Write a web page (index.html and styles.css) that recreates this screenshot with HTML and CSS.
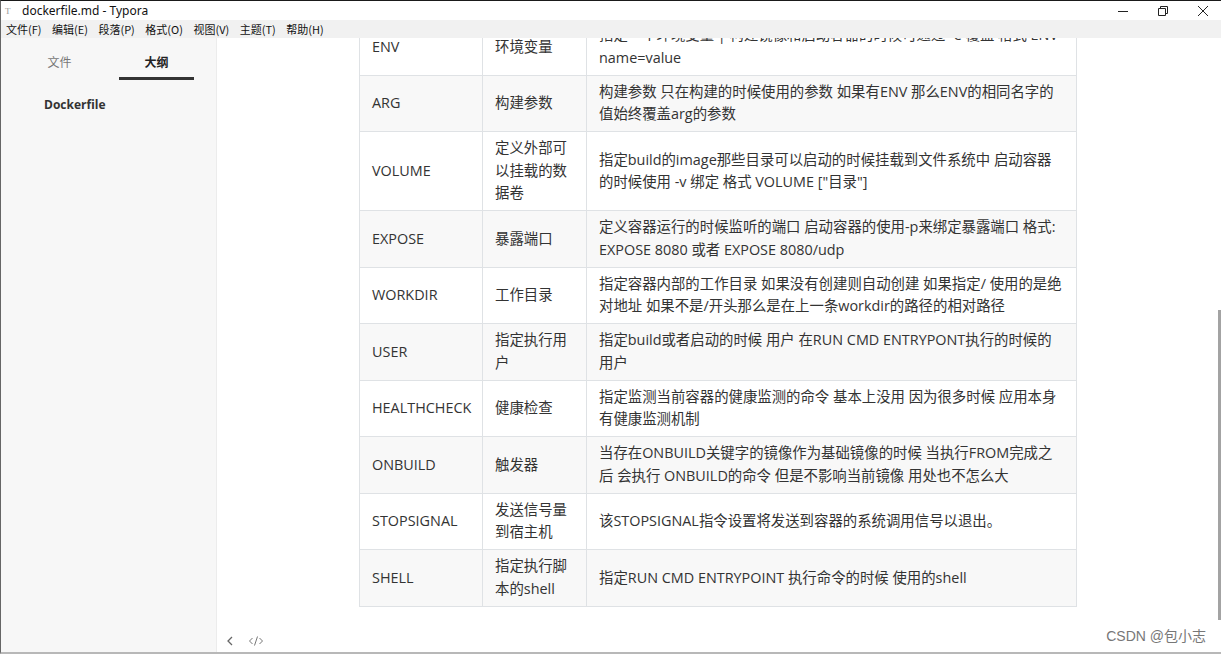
FILE: index.html
```html
<!DOCTYPE html>
<html lang="zh-CN">
<head>
<meta charset="utf-8">
<title>dockerfile.md - Typora</title>
<link rel="stylesheet" href="styles.css">
</head>
<body>
<div class="window">
  <header class="titlebar">
    <span class="app-icon">T</span>
    <span class="title">dockerfile.md - Typora</span>
    <div class="controls">
      <svg class="ctl" width="12" height="12" viewBox="0 0 12 12"><path d="M1 6.5h10" stroke="#222" stroke-width="1"/></svg>
      <svg class="ctl" width="12" height="12" viewBox="0 0 12 12"><path d="M1.5 3.5h7v7h-7z M3.5 3.5v-2h7v7h-2" fill="none" stroke="#222" stroke-width="1"/></svg>
      <svg class="ctl" width="12" height="12" viewBox="0 0 12 12"><path d="M1 1l10 10M11 1L1 11" stroke="#222" stroke-width="1"/></svg>
    </div>
  </header>
  <nav class="menubar">
    <span>文件(F)</span><span>编辑(E)</span><span>段落(P)</span><span>格式(O)</span><span>视图(V)</span><span>主题(T)</span><span>帮助(H)</span>
  </nav>
  <div class="main">
    <aside class="sidebar">
      <div class="tabs">
        <div class="tab">文件</div>
        <div class="tab active">大纲</div>
      </div>
      <div class="outline">Dockerfile</div>
    </aside>
    <section class="content">
      <div class="doc">
        <table class="md-table">
          <colgroup><col class="c1"><col class="c2"><col class="c3"></colgroup>
          <tbody>
            <tr><td>ENV</td><td>环境变量</td><td>指定一个环境变量 | 构建镜像和启动容器的时候可通过 -e 覆盖 格式 ENV name=value</td></tr>
            <tr><td>ARG</td><td>构建参数</td><td>构建参数 只在构建的时候使用的参数 如果有ENV 那么ENV的相同名字的值始终覆盖arg的参数</td></tr>
            <tr><td>VOLUME</td><td>定义外部可以挂载的数据卷</td><td>指定build的image那些目录可以启动的时候挂载到文件系统中 启动容器的时候使用 -v 绑定 格式 VOLUME ["目录"]</td></tr>
            <tr><td>EXPOSE</td><td>暴露端口</td><td>定义容器运行的时候监听的端口 启动容器的使用-p来绑定暴露端口 格式: EXPOSE 8080 或者 EXPOSE 8080/udp</td></tr>
            <tr><td>WORKDIR</td><td>工作目录</td><td>指定容器内部的工作目录 如果没有创建则自动创建 如果指定/ 使用的是绝对地址 如果不是/开头那么是在上一条workdir的路径的相对路径</td></tr>
            <tr><td>USER</td><td>指定执行用户</td><td>指定build或者启动的时候 用户 在RUN CMD ENTRYPONT执行的时候的用户</td></tr>
            <tr><td>HEALTHCHECK</td><td>健康检查</td><td>指定监测当前容器的健康监测的命令 基本上没用 因为很多时候 应用本身有健康监测机制</td></tr>
            <tr><td>ONBUILD</td><td>触发器</td><td>当存在ONBUILD关键字的镜像作为基础镜像的时候 当执行FROM完成之后 会执行 ONBUILD的命令 但是不影响当前镜像 用处也不怎么大</td></tr>
            <tr><td>STOPSIGNAL</td><td>发送信号量到宿主机</td><td>该STOPSIGNAL指令设置将发送到容器的系统调用信号以退出。</td></tr>
            <tr><td>SHELL</td><td>指定执行脚本的shell</td><td>指定RUN CMD ENTRYPOINT 执行命令的时候 使用的shell</td></tr>
          </tbody>
        </table>
      </div>
      <footer class="footer">
        <svg width="10" height="12" viewBox="0 0 10 12"><path d="M7 2L3 6l4 4" fill="none" stroke="#666" stroke-width="1.3"/></svg>
        <svg width="16" height="12" viewBox="0 0 16 12"><path d="M4.5 3L1.5 6l3 3M11.5 3l3 3-3 3M9.5 1.5l-3 9" fill="none" stroke="#777" stroke-width="1"/></svg>
      </footer>
      <div class="scrollbar"></div>
      <div class="watermark">CSDN @包小志</div>
    </section>
  </div>
</div>
</body>
</html>
```

FILE: styles.css
```css
* { box-sizing: border-box; }
html, body { margin: 0; padding: 0; }
body {
  width: 1221px;
  height: 654px;
  overflow: hidden;
  font-family: "Open Sans", "Noto Sans CJK SC", sans-serif;
  color: #333;
  background: #fff;
}
.window {
  height: 654px;
  display: flex;
  flex-direction: column;
  border-top: 1px solid #1a1a1a;
  border-left: 1px solid #666;
  border-bottom: 2px solid #b8b8b8;
}
.titlebar {
  height: 19px;
  flex: none;
  display: flex;
  align-items: center;
  background: #fff;
  font-family: "Noto Sans", "Noto Sans CJK SC", sans-serif;
  font-size: 12px;
  color: #111;
}
.app-icon {
  width: 10px;
  margin-left: 4px;
  font-size: 9px;
  color: #999;
  font-family: "Liberation Serif", serif;
}
.title { margin-left: 7px; }
.controls {
  margin-left: auto;
  display: flex;
  gap: 28px;
  padding-right: 12px;
}
.ctl { display: block; }
.menubar {
  height: 18px;
  flex: none;
  display: flex;
  align-items: center;
  gap: 10.5px;
  padding-left: 5px;
  background: #f1f1f1;
  font-family: "Noto Sans CJK SC", sans-serif;
  font-size: 11px;
  color: #111;
}
.main {
  flex: 1;
  display: flex;
  min-height: 0;
}
.sidebar {
  width: 216px;
  flex: none;
  background: #f7f7f7;
  border-right: 1px solid #ececec;
}
.tabs {
  display: flex;
  gap: 22px;
  padding: 15px 0 0 21px;
}
.tab {
  width: 75px;
  text-align: center;
  font-family: "Noto Sans CJK SC", sans-serif;
  font-size: 12px;
  line-height: 18px;
  color: #777;
  padding-bottom: 6px;
  border-bottom: 3px solid transparent;
}
.tab.active {
  color: #222;
  font-weight: bold;
  border-bottom-color: #333;
}
.outline {
  padding: 16px 0 0 43px;
  font-size: 12px;
  font-weight: bold;
  color: #333;
}
.content {
  flex: 1;
  display: flex;
  flex-direction: column;
  position: relative;
  min-width: 0;
  background: #fff;
}
.doc {
  flex: 1;
  overflow: hidden;
  padding-left: 142px;
}
.md-table {
  margin-top: -20px;
  border-collapse: collapse;
  table-layout: fixed;
  width: 717px;
  font-size: 14.4px;
  line-height: 22.5px;
}
.c1 { width: 123px; }
.c2 { width: 104px; }
.c3 { width: 490px; }
.md-table td {
  border: 1px solid #dfe2e5;
  padding: 5.25px 13px 5.25px 12px;
  vertical-align: middle;
  color: #333;
}
.md-table tr:nth-child(2n) { background: #f8f8f8; }
.footer {
  height: 22px;
  flex: none;
  display: flex;
  align-items: center;
  gap: 13px;
  padding: 0 0 0 8px;
}
.footer svg { display: block; }
.scrollbar {
  position: absolute;
  right: 0;
  top: 272px;
  width: 3px;
  height: 310px;
  background: #a3a3a3;
}
.watermark {
  position: absolute;
  right: 15px;
  bottom: 7px;
  font-family: "Liberation Sans", "Noto Sans CJK SC", sans-serif;
  font-size: 14px;
  color: #777;
}
```
